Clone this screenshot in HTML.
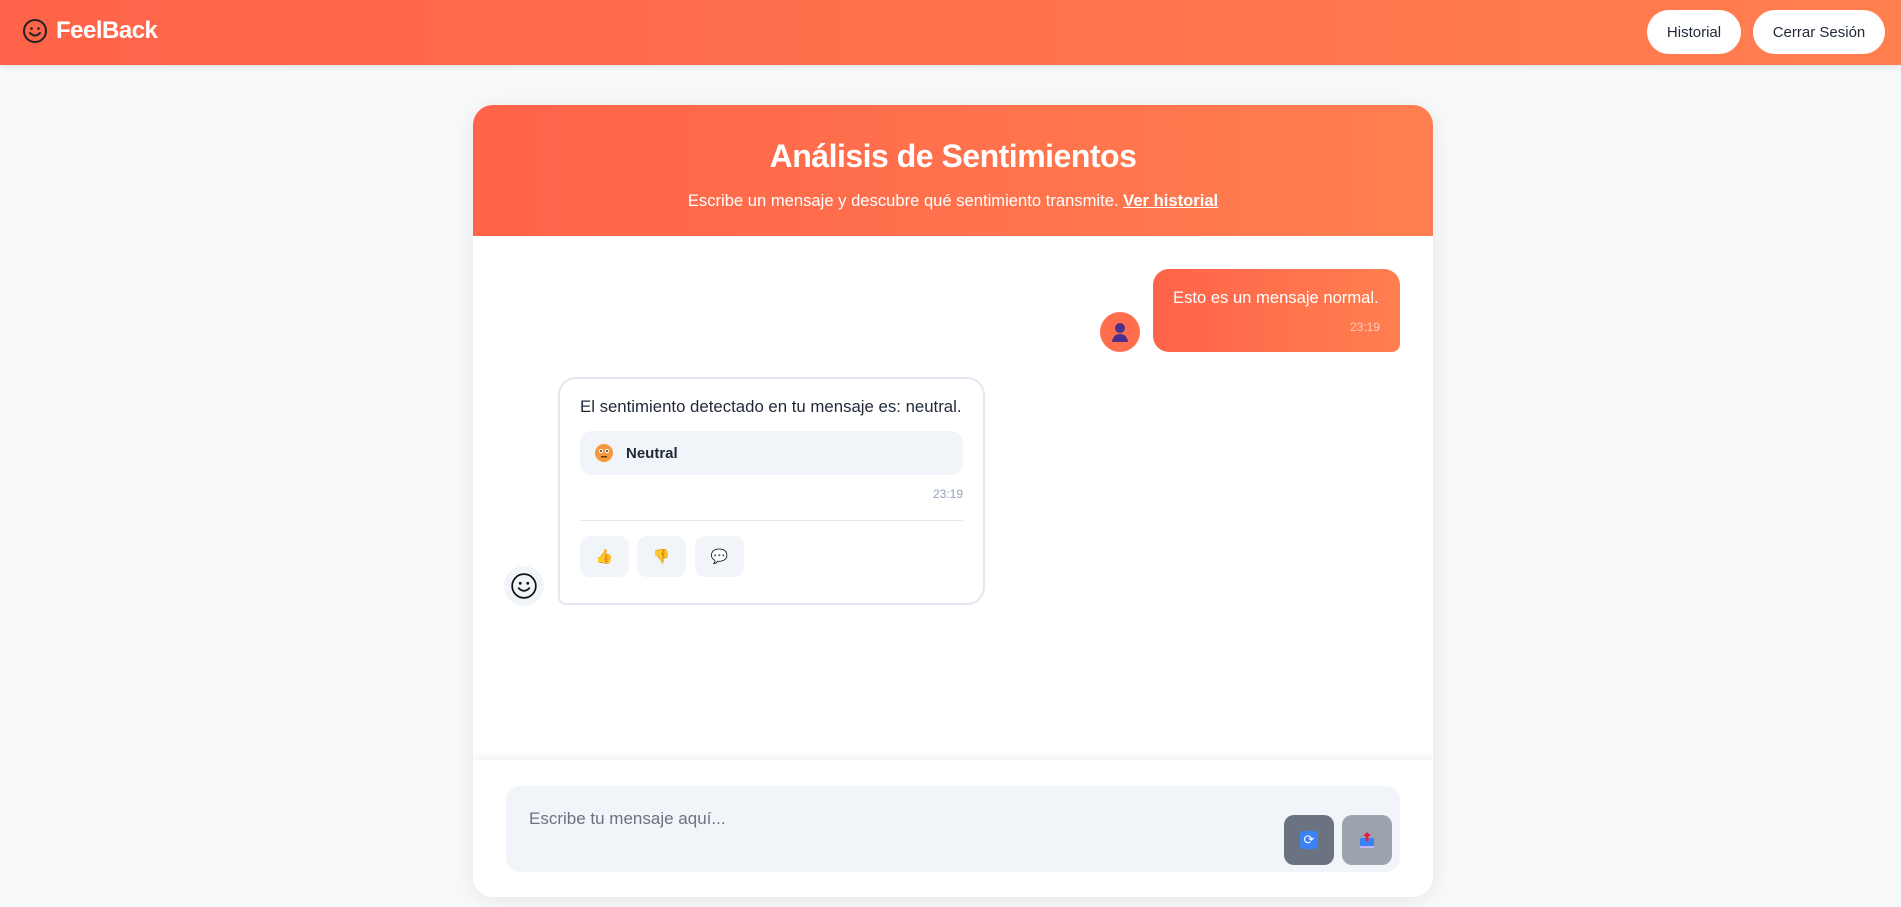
<!DOCTYPE html>
<html><head><meta charset="utf-8"><style>
*{box-sizing:border-box;margin:0;padding:0}
html,body{width:1901px;height:907px;overflow:hidden}
body{background:#f8f9fb;font-family:"Liberation Sans",sans-serif;position:relative;color:#1f2937}
.top{position:absolute;left:0;top:0;width:1901px;height:65px;background:linear-gradient(90deg,#ff6349,#ff7f50);box-shadow:0 2px 6px rgba(0,0,0,.1)}
.logo{position:absolute;left:22px;top:17px;display:flex;align-items:center;color:#fff;font-weight:bold;font-size:24px;letter-spacing:-0.5px}
.btn{position:absolute;top:10px;height:44px;background:#fff;border-radius:22px;font-size:15px;display:flex;align-items:center;justify-content:center;color:#1f2937}
.card{position:absolute;left:473px;top:105px;width:960px;height:792px;background:#fff;border-radius:20px;box-shadow:0 4px 24px rgba(0,0,0,.08);overflow:hidden}
.ch{height:131px;background:linear-gradient(90deg,#ff6349,#ff7f50);color:#fff;text-align:center}
.ch h1{padding-top:33px;font-size:32px;letter-spacing:-0.5px}
.ch p{margin-top:16px;font-size:16.6px}
.ub{position:absolute;left:680px;top:164px;width:247px;height:83px;border-radius:16px 16px 8px 16px;background:linear-gradient(90deg,#ff6349,#ff7f50);color:#fff;font-size:16.6px;padding:19px 20px 0 20px;white-space:nowrap}
.t{font-size:12px;text-align:right;margin-top:12px;opacity:.6}
.bb{position:absolute;left:85px;top:272px;width:427px;height:228px;border:2px solid #e2e8f0;border-radius:18px 18px 18px 8px;padding:18px 20px;font-size:16.8px;white-space:nowrap}
.pill{margin-top:14px;height:44px;background:#f1f4f8;border-radius:12px;display:flex;align-items:center;padding-left:14px;font-weight:bold;font-size:15px}
.rb{position:absolute;top:157px;width:49px;height:41px;background:#f1f4f8;border-radius:10px;display:flex;align-items:center;justify-content:center;font-size:14px}
.foot{position:absolute;left:0;top:655px;width:960px;height:137px;background:#fff;box-shadow:0 -3px 8px rgba(0,0,0,.06)}
.inp{position:absolute;left:33px;top:26px;width:894px;height:86px;background:#f1f4f8;border-radius:14px;padding:23px 23px;font-size:17px;color:#6b7280}
.ib{position:absolute;width:50px;height:50px;border-radius:10px;display:flex;align-items:center;justify-content:center;font-size:18px}
</style></head><body>
<div class="top">
<div class="logo"><svg width="26" height="26" viewBox="0 0 26 26" style="margin-right:8px"><circle cx="13" cy="13" r="11" fill="none" stroke="#222" stroke-width="2"/><circle cx="9.5" cy="10.5" r="1.3" fill="#222"/><circle cx="16.5" cy="10.5" r="1.3" fill="#222"/><path d="M8 15 Q13 20 18 15" fill="none" stroke="#222" stroke-width="2" stroke-linecap="round"/></svg>FeelBack</div>
<div class="btn" style="left:1647px;width:94px">Historial</div>
<div class="btn" style="left:1753px;width:132px">Cerrar Sesión</div>
</div>
<div class="card">
<div class="ch"><h1>Análisis de Sentimientos</h1><p>Escribe un mensaje y descubre qué sentimiento transmite. <b style="text-decoration:underline">Ver historial</b></p></div>
<div style="position:absolute;left:627px;top:207px;width:40px;height:40px;border-radius:50%;background:#ff6d4d;display:flex;align-items:center;justify-content:center"><svg width="20" height="22" viewBox="0 0 20 22"><circle cx="10" cy="7" r="5" fill="#4b2f8f"/><path d="M2 21 Q3 13 10 13 Q17 13 18 21Z" fill="#4b2f8f"/></svg></div>
<div class="ub">Esto es un mensaje normal.<div class="t">23:19</div></div>
<div style="position:absolute;left:31px;top:461px;width:40px;height:40px;border-radius:50%;background:#f1f4f8;display:flex;align-items:center;justify-content:center"><svg width="28" height="28" viewBox="0 0 26 26"><circle cx="13" cy="13" r="11" fill="none" stroke="#111" stroke-width="1.6"/><circle cx="9.5" cy="10.5" r="1.3" fill="#111"/><circle cx="16.5" cy="10.5" r="1.3" fill="#111"/><path d="M8 15 Q13 20 18 15" fill="none" stroke="#111" stroke-width="1.6" stroke-linecap="round"/></svg></div>
<div class="bb">El sentimiento detectado en tu mensaje es: neutral.
<div class="pill"><svg width="20" height="20" viewBox="0 0 20 20" style="margin-right:12px"><circle cx="10" cy="10" r="9" fill="#f59a3c"/><circle cx="7" cy="8" r="2" fill="#fff"/><circle cx="13" cy="8" r="2" fill="#fff"/><circle cx="7" cy="8" r="1" fill="#333"/><circle cx="13" cy="8" r="1" fill="#333"/><rect x="7" y="13" width="6" height="1.5" fill="#6b3a1a"/></svg>Neutral</div>
<div class="t" style="color:#94a3b8;opacity:1;font-size:12px;margin-top:12px">23:19</div>
<div style="height:1px;background:#e2e8f0;margin-top:19px"></div>
<div class="rb" style="left:20px">👍</div><div class="rb" style="left:77px">👎</div><div class="rb" style="left:135px">💬</div>
</div>
<div class="foot"><div class="inp">Escribe tu mensaje aquí...</div></div>
</div>
<div class="ib" style="left:1284px;top:815px;background:#6b7280"><div style="width:18px;height:18px;background:#3b82f6;border-radius:3px;color:#fff;font-size:13px;text-align:center;line-height:18px">⟳</div></div>
<div class="ib" style="left:1342px;top:815px;background:#9ca3af"><svg width="20" height="20" viewBox="0 0 20 20"><rect x="3" y="8" width="14" height="9" fill="#3b82f6"/><rect x="3" y="16" width="14" height="2" fill="#c4b5fd"/><path d="M10 2 L14 6 H11.5 V11 H8.5 V6 H6Z" fill="#e11d48"/></svg></div>
</body></html>
